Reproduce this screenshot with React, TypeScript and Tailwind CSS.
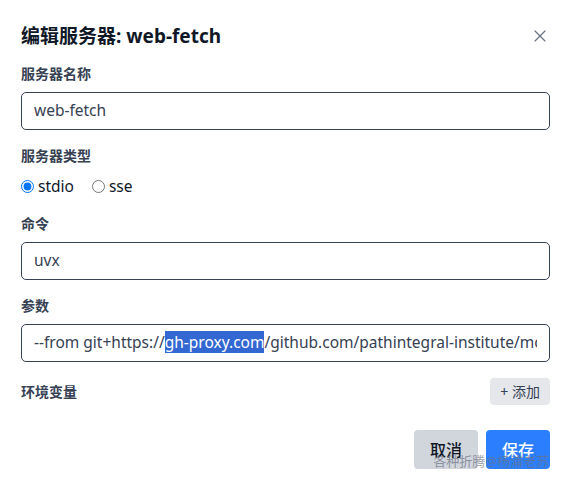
import { X } from "lucide-react";

const font = { fontFamily: '"Noto Sans", "Noto Sans CJK SC", sans-serif' };

function Field({ label, children }: { label: string; children: React.ReactNode }) {
  return (
    <div>
      <label className="block text-sm font-bold text-gray-700 leading-5 mb-2">{label}</label>
      {children}
    </div>
  );
}

function TextBox({ children }: { children: React.ReactNode }) {
  return (
    <div className="h-[38px] w-full border border-gray-700 rounded-[5px] px-3 flex items-center bg-white">
      <div className="flex-1 overflow-hidden whitespace-nowrap text-[15.5px] text-gray-700">{children}</div>
    </div>
  );
}

export default function App() {
  return (
    <div className="relative w-[571px] h-[489px] bg-white px-[21px] pt-[22px]" style={font}>
      {/* Header */}
      <div className="flex items-center justify-between">
        <h2 className="text-[19px] font-bold text-gray-900 leading-7">编辑服务器: web-fetch</h2>
        <button className="text-gray-500">
          <X size={20} strokeWidth={1.4} />
        </button>
      </div>

      <div className="mt-[14px] space-y-4">
        <Field label="服务器名称">
          <TextBox>web-fetch</TextBox>
        </Field>

        <Field label="服务器类型">
          <div className="flex items-center gap-2 text-[15.5px] text-gray-900 leading-5 pt-0.5 pb-[2px]">
            <label className="flex items-center gap-1">
              <input type="radio" name="type" defaultChecked className="w-[13px] h-[13px] m-0" />
              stdio
            </label>
            <label className="flex items-center gap-1 ml-[10px]">
              <input type="radio" name="type" className="w-[13px] h-[13px] m-0" />
              sse
            </label>
          </div>
        </Field>

        <Field label="命令">
          <TextBox>uvx</TextBox>
        </Field>

        <Field label="参数">
          <TextBox>
            <span>--from git+https://</span>
            <span className="bg-[#3367d1] text-white">gh-proxy.com</span>
            <span>/github.com/pathintegral-institute/mcp.science#subdirectory=servers/web-fetch mcp-web-fetch</span>
          </TextBox>
        </Field>

        <div className="flex items-center justify-between">
          <span className="text-sm font-bold text-gray-700">环境变量</span>
          <button className="h-[27px] px-[10px] rounded bg-gray-200 text-sm text-gray-700">+ 添加</button>
        </div>
      </div>

      <div className="flex justify-end gap-2 mt-[25px]">
        <button className="h-[39px] w-16 rounded bg-gray-300 text-base font-medium text-gray-900">取消</button>
        <button className="h-[39px] w-16 rounded bg-blue-500 text-base font-medium text-white">保存</button>
      </div>

      <div className="absolute right-[22px] top-[452px] text-[13px] text-gray-500/70 pointer-events-none">
        各种折腾@杨浦老苏
      </div>
    </div>
  );
}
